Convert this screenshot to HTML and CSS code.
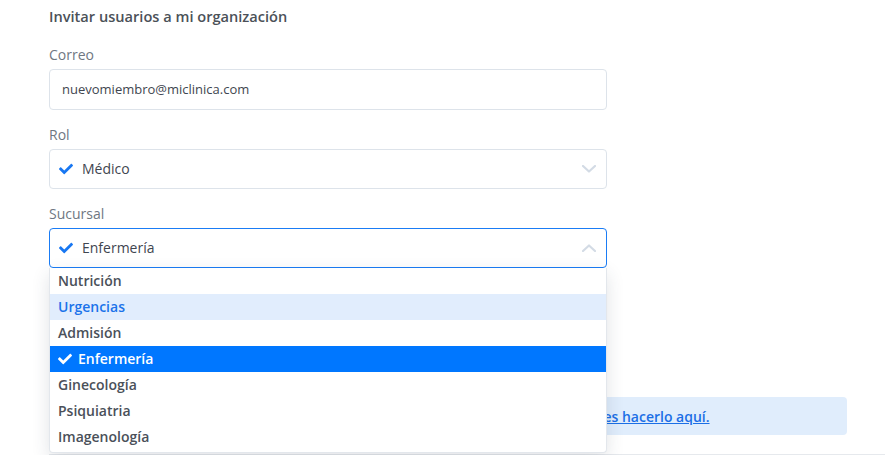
FILE: index.html
```html
<!DOCTYPE html>
<html lang="es">
<head>
<meta charset="utf-8">
<title>Invitar usuarios</title>
<link rel="stylesheet" href="styles.css">
</head>
<body>
<div class="page">
  <h1 class="title">Invitar usuarios a mi organización</h1>

  <div class="field">
    <div class="label">Correo</div>
    <div class="control input">nuevomiembro@miclinica.com</div>
  </div>

  <div class="field">
    <div class="label">Rol</div>
    <div class="control select">
      <svg class="check" viewBox="0 0 512 512"><path d="M173.9 439.4l-166.4-166.4c-10-10-10-26.2 0-36.2l36.2-36.2c10-10 26.2-10 36.2 0L192 312.7 432.1 72.6c10-10 26.2-10 36.2 0l36.2 36.2c10 10 10 26.2 0 36.2l-294.4 294.4c-10 10-26.2 10-36.2 0z"/></svg>
      <span class="value">Médico</span>
      <svg class="chev" viewBox="0 0 14 8"><polyline points="1,1 7,6.5 13,1"/></svg>
    </div>
  </div>

  <div class="field last">
    <div class="label">Sucursal</div>
    <div class="select-wrap">
      <div class="control select open">
        <svg class="check" viewBox="0 0 512 512"><path d="M173.9 439.4l-166.4-166.4c-10-10-10-26.2 0-36.2l36.2-36.2c10-10 26.2-10 36.2 0L192 312.7 432.1 72.6c10-10 26.2-10 36.2 0l36.2 36.2c10 10 10 26.2 0 36.2l-294.4 294.4c-10 10-26.2 10-36.2 0z"/></svg>
        <span class="value">Enfermería</span>
        <svg class="chev" viewBox="0 0 14 8"><polyline points="1,7 7,1.5 13,7"/></svg>
      </div>
      <ul class="menu">
        <li class="opt">Nutrición</li>
        <li class="opt hover">Urgencias</li>
        <li class="opt">Admisión</li>
        <li class="opt selected"><svg class="check white" viewBox="0 0 512 512"><path d="M173.9 439.4l-166.4-166.4c-10-10-10-26.2 0-36.2l36.2-36.2c10-10 26.2-10 36.2 0L192 312.7 432.1 72.6c10-10 26.2-10 36.2 0l36.2 36.2c10 10 10 26.2 0 36.2l-294.4 294.4c-10 10-26.2 10-36.2 0z"/></svg>Enfermería</li>
        <li class="opt">Ginecología</li>
        <li class="opt">Psiquiatria</li>
        <li class="opt">Imagenología</li>
      </ul>
    </div>
  </div>

  <div class="info">Si necesitas invitar a varios usuarios a la vez, <a href="#" class="link">puedes hacerlo aquí.</a></div>
  <div class="rule"></div>
</div>
</body>
</html>
```
FILE: styles.css
```css
html, body {
  margin: 0;
  padding: 0;
  background: #ffffff;
}
body {
  font-family: "Open Sans", Lato, "Liberation Sans", sans-serif;
  color: #4a5059;
}
.page {
  padding: 7px 38px 0 49px;
}
.title {
  margin: 0;
  font-size: 14.6px;
  line-height: 19px;
  font-weight: 600;
  color: #4b5158;
}
.field {
  width: 558px;
  margin-top: 20px;
}
.field + .field {
  margin-top: 16px;
}
.label {
  font-size: 14px;
  line-height: 18px;
  color: #6f7782;
  margin-bottom: 5px;
}
.control {
  box-sizing: border-box;
  height: 40px;
  border: 1px solid #dde3ea;
  border-radius: 4px;
  display: flex;
  align-items: center;
  font-size: 13px;
  color: #3f4650;
}
.input {
  height: 41px;
  padding-left: 12px;
  padding-bottom: 1px;
}
.select {
  padding: 0 9px 1px 9px;
  font-size: 14px;
}
.select .value {
  flex: 1;
  margin-left: 9px;
}
.check {
  width: 14px;
  height: 14px;
  fill: #1877f2;
  flex: none;
}
.check.white {
  fill: #ffffff;
  margin-right: 6px;
}
.chev {
  width: 14px;
  height: 8px;
  fill: none;
  stroke: #d3dbe5;
  stroke-width: 2.2;
  stroke-linecap: round;
  stroke-linejoin: round;
  margin-right: 1px;
}
.select-wrap {
  position: relative;
}
.select.open {
  border-color: #1a7cf5;
  border-width: 1.5px;
}
.menu {
  position: absolute;
  left: 0;
  right: 0;
  top: 40px;
  margin: 0;
  padding: 0 0 2px;
  list-style: none;
  background: #ffffff;
  border: 1px solid #e3e7ec;
  border-top: none;
  border-radius: 0 0 4px 4px;
  box-shadow: 0 6px 18px rgba(40, 55, 75, 0.14);
  z-index: 5;
}
.opt {
  height: 26px;
  display: flex;
  align-items: center;
  padding-left: 8px;
  padding-bottom: 1px;
  box-sizing: border-box;
  font-size: 14px;
  font-weight: 600;
  color: #4a5059;
}
.opt.hover {
  background: #e1edfd;
  color: #1b73ea;
}
.opt.selected {
  background: #0077ff;
  color: #ffffff;
}
.info {
  margin-top: 129px;
  width: 798px;
  box-sizing: border-box;
  height: 38px;
  border-radius: 4px;
  background: #e0edfc;
  display: flex;
  align-items: center;
  padding-left: 215px;
  font-size: 14px;
  font-weight: 600;
  color: #1b6fe6;
}
.link {
  color: #1b6fe6;
  text-decoration: underline;
  margin-left: 4px;
}
.rule {
  margin-top: 19px;
  height: 1px;
  background: #e6e9ed;
  margin-right: -38px;
}
```
